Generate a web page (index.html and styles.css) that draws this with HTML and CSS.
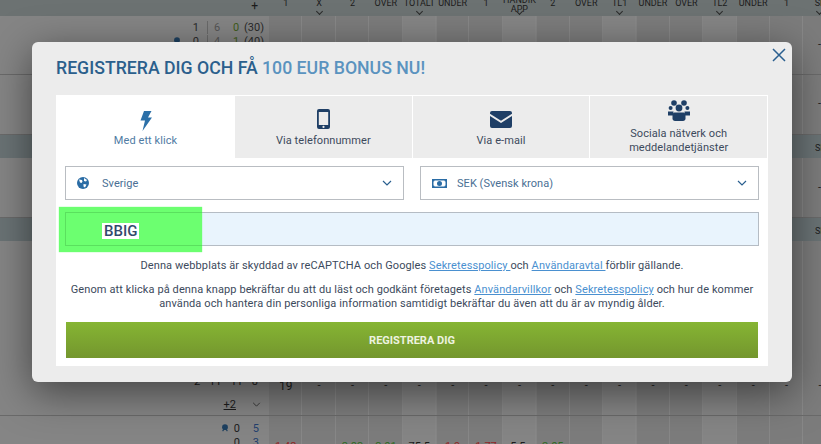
FILE: index.html
```html
<!DOCTYPE html>
<html lang="sv">
<head>
<meta charset="utf-8">
<title>Registrera dig</title>
<link rel="stylesheet" href="styles.css">
</head>
<body>
<div class="board">
  <div class="head">
    <span class="lead">+</span>
    <span class="c">1</span><span class="c sel">X</span><span class="c">2</span><span class="c">OVER</span><span class="c sel">TOTALT</span><span class="c">UNDER</span><span class="c">1</span><span class="c sel two">HANDIK<br>APP</span><span class="c">2</span><span class="c">OVER</span><span class="c sel">TL1</span><span class="c">UNDER</span><span class="c">OVER</span><span class="c sel">TL2</span><span class="c">UNDER</span><span class="c">1</span><span class="c sel">SE</span>
  </div>
  <div class="row r60 first">
    <div class="lead">
      <div class="score"><span class="pt">1</span><span class="sep">6</span><span class="g">0</span><span class="tot">(30)</span></div>
      <div class="score"><svg class="ping" viewBox="0 0 10 10"><circle cx="5" cy="4" r="3.600" fill="#1d4060"/><path d="M2 9l3-4 3 4" stroke="#1d4060" fill="none" stroke-width="1.400"/></svg><span class="pt">0</span><span class="sep">4</span><span class="g">1</span><span class="tot">(40)</span></div>
    </div>
    <div class="edge">-</div>
  </div>
  <div class="row r60"><div class="lead"></div><div class="edge">-</div></div>
  <div class="band"><span class="se">SE</span></div>
  <div class="row r60"><div class="lead"></div><div class="edge e30">-</div></div>
  <div class="band"><span class="se">SE</span></div>
  <div class="row r175">
    <div class="lead bottom">
      <div class="nums"><span>2</span><span>11</span><span>11</span><span>8</span></div>
      <div class="more"><u>+2</u><svg class="chev" viewBox="0 0 10 6"><path d="M1 1l4 4 4-4" fill="none" stroke="currentColor" stroke-width="1.100"/></svg></div>
    </div>
    <div class="dashes"><span class="c num">19</span><span class="c">-</span><span class="c">-</span><span class="c">-</span><span class="c">-</span><span class="c">-</span><span class="c">-</span><span class="c">-</span><span class="c">-</span><span class="c">-</span><span class="c">-</span><span class="c">-</span><span class="c">-</span><span class="c">-</span><span class="c">-</span><span class="c">-</span><span class="c">-</span></div>
  </div>
  <div class="row last">
    <div class="lead sets">
      <div class="set"><svg class="ping" viewBox="0 0 10 10"><circle cx="5" cy="4" r="3.600" fill="#1d4060"/><path d="M2 9l3-4 3 4" stroke="#1d4060" fill="none" stroke-width="1.400"/></svg><span>0</span><b>5</b></div>
      <div class="set"><span>0</span><b>3</b></div>
    </div>
    <div class="odds"><span class="c r">1.42</span><span class="c"></span><span class="c gr">2.83</span><span class="c gr">3.01</span><span class="c">75.5</span><span class="c r">1.9</span><span class="c r">1.77</span><span class="c">5.5-</span><span class="c gr">2.05</span></div>
  </div>
</div>

<section class="modal">
  <svg class="close" viewBox="0 0 14 14"><path d="M1 1l12 12M13 1L1 13" fill="none" stroke="#2a5f8f" stroke-width="1.500"/></svg>
  <h1 class="title">Registrera dig och få <span>100 EUR bonus nu!</span></h1>
  <div class="panel">
    <div class="tabs">
      <div class="tab active">
        <svg class="ico bolt" viewBox="0 0 12 20"><path d="M4 0h7.500L8 6.500h4L2.500 20 5 9.500H0.500z" fill="#2c70a8"/></svg>
        <span>Med ett klick</span>
      </div>
      <div class="tab">
        <svg class="ico phone" viewBox="0 0 13 20"><path fill-rule="evenodd" d="M2 0h9a2 2 0 0 1 2 2v16a2 2 0 0 1-2 2H2a2 2 0 0 1-2-2V2a2 2 0 0 1 2-2zM1.800 3v13h9.400V3zM6.500 16.800a1.100 1.100 0 1 0 0 2.200 1.100 1.100 0 0 0 0-2.200z" fill="#1f3f66"/></svg>
        <span>Via telefonnummer</span>
      </div>
      <div class="tab">
        <svg class="ico mail" viewBox="0 0 22 17"><path d="M2 0h18a2 2 0 0 1 2 2v.8L11 9.800 0 2.800V2a2 2 0 0 1 2-2zM0 5l11 7 11-7v10a2 2 0 0 1-2 2H2a2 2 0 0 1-2-2z" fill="#1f3f66"/></svg>
        <span>Via e-mail</span>
      </div>
      <div class="tab social">
        <svg class="ico users" viewBox="0 0 22 21"><g fill="#1f3f66"><circle cx="6" cy="3" r="2.800"/><circle cx="16" cy="3" r="2.800"/><circle cx="11" cy="8" r="3.400"/><circle cx="2.600" cy="8" r="2"/><circle cx="19.400" cy="8" r="2"/><path d="M0 11.500h5.500l-.5 4H0zM22 11.500h-5.500l.5 4h5z"/><path d="M6.500 12.500h9c1.500 0 2 1.500 2 3.500v2.500c0 1.500-1 2.500-2.500 2.500H7c-1.500 0-2.500-1-2.500-2.500V16c0-2 .5-3.500 2-3.500z"/></g></svg>
        <span>Sociala nätverk och<br>meddelandetjänster</span>
      </div>
    </div>
    <div class="form">
      <div class="selects">
        <div class="select">
          <svg class="sicon" viewBox="0 0 12 12"><circle cx="6" cy="6" r="6" fill="#2a6ca5"/><path d="M2 2.500l3 .5.500 1.500-1 1.500L3 5.500zM7 1l3 2-1 1.500-2-.5zM6.500 7l3 .5-1.500 3-1.500-1z" fill="#fff"/></svg>
          <span class="val">Sverige</span>
          <svg class="arrow" viewBox="0 0 10 6"><path d="M1 1l4 4 4-4" fill="none" stroke="#2a5f8f" stroke-width="1.200"/></svg>
        </div>
        <div class="select">
          <svg class="sicon money" viewBox="0 0 15 9"><path fill-rule="evenodd" d="M0 0h15v9H0zM2.500 1.500a1 1 0 0 1-1 1v4a1 1 0 0 1 1 1h10a1 1 0 0 1 1-1v-4a1 1 0 0 1-1-1zM7.500 2a2.500 2.500 0 1 0 0 5 2.500 2.500 0 0 0 0-5z" fill="#2a6ca5"/><rect x="7" y="3" width="1" height="3" fill="#2a6ca5"/></svg>
          <span class="val">SEK (Svensk krona)</span>
          <svg class="arrow" viewBox="0 0 10 6"><path d="M1 1l4 4 4-4" fill="none" stroke="#2a5f8f" stroke-width="1.200"/></svg>
        </div>
      </div>
      <div class="field">
        <div class="mark"><span>BBIG</span></div>
      </div>
      <p class="note first-note">Denna webbplats är skyddad av reCAPTCHA och Googles <a href="#">Sekretesspolicy </a>och <a href="#">Användaravtal </a>förblir gällande.</p>
      <p class="note">Genom att klicka på denna knapp bekräftar du att du läst och godkänt företagets <a href="#">Användarvillkor</a> och <a href="#">Sekretesspolicy</a> och hur de kommer använda och hantera din personliga information samtidigt bekräftar du även att du är av myndig ålder.</p>
      <button class="submit" type="button">REGISTRERA DIG</button>
    </div>
  </div>
</section>
</body>
</html>
```
FILE: styles.css
```css
* { box-sizing: border-box; }
html, body { margin: 0; height: 100%; }
body {
  position: relative;
  width: 821px;
  height: 444px;
  overflow: hidden;
  font-family: Roboto, "Liberation Sans", sans-serif;
  background: #7c7c7c;
}

/* Page behind the dialog, with the dimmed colours it has under the backdrop */
.board { width: 821px; height: 444px; overflow: hidden; color: #1c1c1c; font-size: 11px; }
.head {
  display: flex;
  height: 16px;
  background: #6c7272;
  color: #1c1c1c;
  font-size: 9px;
  line-height: 9px;
  align-items: flex-start;
  overflow: hidden;
}
.head .lead { text-align: right; padding-right: 11px; font-size: 12px; line-height: 12px; background: transparent; }
.lead { width: 269px; flex: none; background: #858585; }
.c { width: 33.400px; flex: none; text-align: center; display: block; white-space: nowrap; }
.head .c { margin-top: -1px; }
.head .two { margin-top: -4px; }
.sel::after {
  content: "";
  display: block;
  width: 4px;
  height: 4px;
  margin: 1px auto 0;
  border-right: 1px solid #2a2a2a;
  border-bottom: 1px solid #2a2a2a;
  transform: rotate(45deg);
}
.two.sel::after { margin-top: -5px; }
.row {
  display: flex;
  border-bottom: 1px solid #6a6a6a;
  background-color: #7c7c7c;
  background-image:
    repeating-linear-gradient(90deg, transparent 0 32.400px, #888 32.400px 33.400px),
    linear-gradient(90deg, transparent 403px, #858585 403px 437px, transparent 437px 503px, #858585 503px 537px, transparent 537px 603px, #858585 603px 637px, transparent 637px 703px, #858585 703px 737px, transparent 737px);
  background-position: 269px 0, 0 0;
  background-size: auto, 100% 100%;
  background-repeat: no-repeat;
  position: relative;
}
.r60 { height: 60px; }
.first { height: 59px; }
.r175 { height: 175px; }
.last { height: 29px; border-bottom: 0; }
.band {
  height: 23px;
  background: #6a7375;
  display: flex;
  justify-content: flex-end;
  padding: 8px 0 0;
  font-size: 9px;
  color: #1c1c1c;
}
.se { width: 7px; overflow: hidden; margin-right: -1px; }
.score {
  display: flex;
  justify-content: flex-end;
  align-items: center;
  height: 14px;
  margin-top: 4px;
  padding-right: 5px;
  font-size: 11px;
  color: #2a2a2a;
}
.score + .score { margin-top: 0; }
.score .ping { margin-right: 8px; }
.pt { width: 10px; text-align: right; }
.sep { width: 22px; margin-left: 8px; padding-left: 6px; color: #555; border-left: 1px solid #6a6a6a; }
.g { width: 14px; text-align: center; color: #3f5c1a; }
.tot { width: 21px; text-align: right; }
.edge { position: absolute; left: 818px; top: 22px; }
.e30 { top: 23px; }
.bottom { padding-top: 134px; }
.nums { display: flex; justify-content: flex-end; gap: 9px; padding-right: 11px; height: 13px; line-height: 13px; font-size: 11px; }
.more { display: flex; justify-content: flex-end; align-items: center; gap: 16px; padding-right: 8px; margin-top: 10px; font-size: 11px; }
.chev { width: 9px; height: 5px; color: #333; }
.dashes { display: flex; padding-top: 138px; }
.num { font-size: 12px; }
.sets { padding-top: 5px; font-size: 11px; }
.set { display: flex; justify-content: flex-end; align-items: center; gap: 13px; padding-right: 10px; height: 14px; }
.set b { font-weight: 400; color: #23406e; }
.ping { width: 8px; height: 8px; flex: none; }
.set .ping { margin-right: -8px; }
.odds { display: flex; padding-top: 24px; font-size: 11px; }
.r { color: #8f2626; }
.gr { color: #2e6b22; }

/* Dialog */
.modal {
  position: absolute;
  left: 32px;
  top: 42px;
  width: 760px;
  height: 340px;
  padding: 0 24px 16px;
  background: #ececec;
  border-radius: 6px;
  box-shadow: 0 10px 40px rgba(0, 0, 0, .5);
}
.close { position: absolute; right: 6px; top: 6px; width: 14px; height: 14px; }
.title {
  margin: 0;
  height: 53px;
  font-size: 17.700px;
  line-height: 53px;
  font-weight: 500;
  text-transform: uppercase;
  color: #2b5f8c;
  white-space: nowrap;
}
.title span { color: #5a93bf; }
.panel { background: #fff; height: 271px; }
.tabs { display: flex; height: 63px; }
.tab {
  flex: 1 1 0;
  display: flex;
  flex-direction: column;
  align-items: center;
  justify-content: flex-end;
  padding-bottom: 10px;
  background: #ececec;
  border-top: 1px solid #fff;
  border-right: 1px solid #fff;
  font-size: 11px;
  letter-spacing: .08px;
  line-height: 14px;
  color: #3c4a5c;
  text-align: center;
}
.tab.active { flex: 0 0 179px; background: #fff; color: #4f7ba3; border: 0; }
.tab.social { padding-bottom: 3px; }
.ico { display: block; margin-bottom: 5px; }
.bolt { width: 12px; height: 20px; margin-bottom: 3px; }
.phone { width: 13px; height: 20px; margin-bottom: 5px; }
.mail { width: 22px; height: 17px; margin-bottom: 6px; }
.users { width: 22px; height: 21px; margin-bottom: 6px; }

.form { padding: 8px 9px 0; }
.selects { display: flex; gap: 16px; }
.select {
  flex: 1 1 0;
  height: 34px;
  display: flex;
  align-items: center;
  padding: 0 12px 0 11px;
  border: 1px solid #b9bdc2;
  background: #fff;
  font-size: 11px;
  color: #4a6f94;
}
.sicon { width: 12px; height: 12px; flex: none; }
.money { width: 15px; height: 9px; }
.val { margin-left: 13px; flex: 1; letter-spacing: .05px; }
.select:last-child .val { margin-left: 10px; }
.arrow { width: 10px; height: 6px; flex: none; margin-right: -1px; }

.field {
  position: relative;
  height: 34px;
  margin-top: 12px;
  background: #e9f4fd;
  border: 1px solid #b5bcc4;
}
.mark {
  position: absolute;
  left: -7px;
  top: -6px;
  width: 143px;
  height: 45px;
  background: #6cff70;
  box-shadow: 0 0 1px #6cff70;
  padding: 16px 0 0 43px;
  font-size: 15px;
  line-height: 16px;
  font-weight: 500;
  color: #334a6c;
}
.mark::before {
  content: "";
  position: absolute;
  left: 6px;
  top: 5px;
  right: 0;
  bottom: 6px;
  border: 1px solid #5ae05e;
  border-right: 0;
}
.mark span { position: relative; background: #fff; padding: 0 2px; display: inline-block; }

.note {
  margin: 0;
  font-size: 11px;
  letter-spacing: .1px;
  line-height: 14px;
  color: #3c4a5c;
  text-align: center;
}
.first-note { margin-top: 13px; }
.note + .note { margin-top: 10px; }
.note a { color: #4a90d0; text-decoration: underline; }
.submit {
  display: block;
  width: 692px;
  height: 36px;
  margin: 11px 0 0 1px;
  border: 0;
  background: linear-gradient(#86b533, #74962e);
  color: #eef3e0;
  font: 700 11px/35px Roboto, "Liberation Sans", sans-serif;
  padding: 1px 0 0;
  text-align: center;
}
```
